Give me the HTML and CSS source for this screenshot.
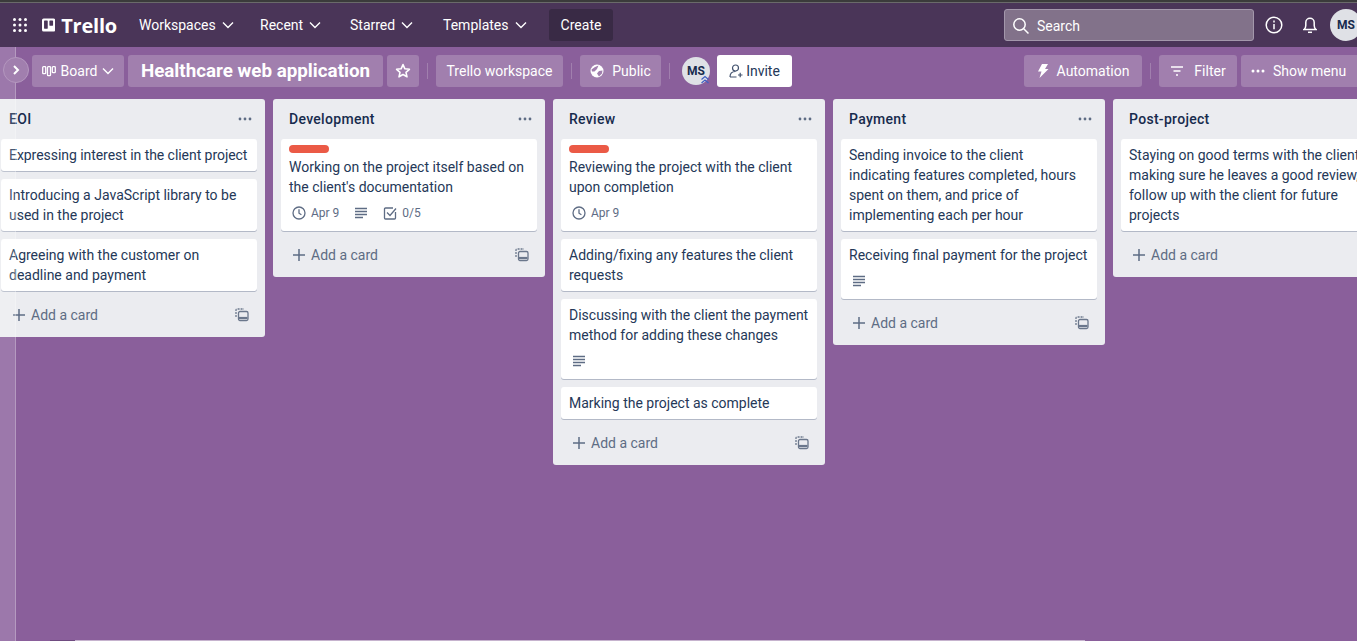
FILE: index.html
```html
<!DOCTYPE html>
<html lang="en">
<head>
<meta charset="UTF-8" />
<title>Healthcare web application | Trello</title>
<link rel="stylesheet" href="styles.css">
</head>
<body>
<div class="top-strip"></div>
<header class="nav">
  <svg class="apps" width="16" height="16" viewBox="0 0 16 16" fill="#fff"><circle cx="2.500" cy="2.500" r="1.500"/><circle cx="8" cy="2.500" r="1.500"/><circle cx="13.500" cy="2.500" r="1.500"/><circle cx="2.500" cy="8" r="1.500"/><circle cx="8" cy="8" r="1.500"/><circle cx="13.500" cy="8" r="1.500"/><circle cx="2.500" cy="13.500" r="1.500"/><circle cx="8" cy="13.500" r="1.500"/><circle cx="13.500" cy="13.500" r="1.500"/></svg>
  <div class="logo">
    <svg width="16" height="16" viewBox="0 0 16 16"><rect width="16" height="16" rx="2" fill="#fff"/><rect x="2.500" y="2.500" width="4.500" height="10" rx=".6" fill="#4a3558"/><rect x="9" y="2.500" width="4.500" height="6.500" rx=".6" fill="#4a3558"/></svg>
    <span>Trello</span>
  </div>
  <a class="nav-link nav-workspaces">Workspaces <svg width="12" height="8" viewBox="0 0 12 8"><path d="M1 1.500l5 5 5-5" fill="none" stroke="#fff" stroke-width="1.400"/></svg></a>
  <a class="nav-link nav-recent">Recent <svg width="12" height="8" viewBox="0 0 12 8"><path d="M1 1.500l5 5 5-5" fill="none" stroke="#fff" stroke-width="1.400"/></svg></a>
  <a class="nav-link nav-starred">Starred <svg width="12" height="8" viewBox="0 0 12 8"><path d="M1 1.500l5 5 5-5" fill="none" stroke="#fff" stroke-width="1.400"/></svg></a>
  <a class="nav-link nav-templates">Templates <svg width="12" height="8" viewBox="0 0 12 8"><path d="M1 1.500l5 5 5-5" fill="none" stroke="#fff" stroke-width="1.400"/></svg></a>
  <button class="create">Create</button>
  <div class="search">
    <svg width="18" height="18" viewBox="0 0 18 18" fill="none" stroke="#fff" stroke-width="1.500"><circle cx="7.500" cy="7.500" r="5.700"/><path d="M11.700 11.700l4.800 4.800"/></svg>
    <span>Search</span>
  </div>
  <svg class="info" width="18" height="18" viewBox="0 0 18 18" fill="none" stroke="#fff" stroke-width="1.500"><circle cx="9" cy="9" r="7.800"/><path d="M9 8v5.200M9 4.600v1.800"/></svg>
  <svg class="bell" width="14" height="18" viewBox="0 0 14 18" fill="none" stroke="#fff" stroke-width="1.500"><path d="M1 13.500h12c-1.200-1-1.800-2-1.800-4V6.500a4.200 4.200 0 0 0-8.400 0v3c0 2-.6 3-1.800 4z"/><path d="M5 16.300h4"/></svg>
  <div class="avatar nav-avatar">MS</div>
</header>

<section class="board-bar">
  <button class="bar-btn board-btn">
    <svg width="14" height="12" viewBox="0 0 14 12" fill="none" stroke="#fff" stroke-width="1.300"><rect x=".7" y="1.700" width="3" height="7" rx=".8"/><rect x="5.500" y="1.700" width="3" height="9" rx=".8"/><rect x="10.300" y="1.700" width="3" height="6" rx=".8"/></svg>
    Board
    <svg width="12" height="8" viewBox="0 0 12 8"><path d="M1 1.500l5 5 5-5" fill="none" stroke="#fff" stroke-width="1.400"/></svg>
  </button>
  <button class="bar-btn title">Healthcare web application</button>
  <button class="bar-btn star">
    <svg width="16" height="16" viewBox="0 0 16 16"><path d="M8 1.600l1.900 4.200 4.500.5-3.400 3 1 4.500L8 11.500l-4 2.300 1-4.500-3.400-3 4.500-.5z" fill="none" stroke="#fff" stroke-width="1.600" stroke-linejoin="round"/></svg>
  </button>
  <i class="divider"></i>
  <button class="bar-btn workspace">Trello workspace</button>
  <i class="divider"></i>
  <button class="bar-btn public">
    <svg width="14" height="14" viewBox="0 0 14 14"><circle cx="7" cy="7" r="6.500" fill="#fff"/><path d="M1.500 5.500L5 3l3.500-1.500L7 5 4.500 7.500 2 7.500zM12.500 6.500l-3.500.5L7 9.500l2 3 3-3z" fill="#a17fae"/></svg>
    Public
  </button>
  <i class="divider"></i>
  <div class="member">
    <div class="avatar">MS</div>
    <svg class="admin" width="10" height="10" viewBox="0 0 10 10" fill="none" stroke="#3f5fc4" stroke-width="1.200"><path d="M1.500 4.500L5 1.500l3.500 3M1.500 8L5 5l3.500 3"/></svg>
  </div>
  <button class="invite">
    <svg width="14" height="14" viewBox="0 0 14 14" fill="none" stroke="#42526e" stroke-width="1.200"><circle cx="6.500" cy="4" r="3"/><path d="M1 13c0-3.500 2-5.500 5.500-5.500M1 13h6.500M9 11h4.500M11.200 8.800v4.400"/></svg>
    Invite
  </button>
  <button class="bar-btn automation">
    <svg width="12" height="16" viewBox="0 0 12 16"><path d="M5 1h6L8 6h3.500L2.500 15 4.500 8.500H1z" fill="#fff"/></svg>
    Automation
  </button>
  <i class="divider"></i>
  <button class="bar-btn filter">
    <svg width="14" height="12" viewBox="0 0 14 12" fill="none" stroke="#fff" stroke-width="1.400"><path d="M1 2h12M3.500 6h7M6 10h2"/></svg>
    Filter
  </button>
  <button class="bar-btn menu">
    <svg width="14" height="4" viewBox="0 0 14 4" fill="#fff"><circle cx="2" cy="2" r="1.500"/><circle cx="7" cy="2" r="1.500"/><circle cx="12" cy="2" r="1.500"/></svg>
    Show menu
  </button>
</section>

<main class="lists">
  <section class="list">
    <div class="list-head"><h2>EOI</h2><svg class="more" width="14" height="4" viewBox="0 0 14 4" fill="#5e6c84"><circle cx="2" cy="2" r="1.400"/><circle cx="7" cy="2" r="1.400"/><circle cx="12" cy="2" r="1.400"/></svg></div>
    <article class="card"><p class="one-line">Expressing interest in the client project</p></article>
    <article class="card"><p>Introducing a JavaScript library to be used in the project</p></article>
    <article class="card"><p>Agreeing with the customer on deadline and payment</p></article>
    <div class="add"><svg width="14" height="14" viewBox="0 0 14 14" stroke="#5e6c84" stroke-width="1.500"><path d="M7 1v12M1 7h12"/></svg><span>Add a card</span><svg class="tpl" width="14" height="14" viewBox="0 0 14 14" fill="none" stroke="#6b778c" stroke-width="1.300"><path d="M1 9V2a1 1 0 0 1 1-1h7" stroke-dasharray="2 1"/><rect x="3.500" y="3.500" width="9.500" height="9" rx="1.500"/><path d="M4 10h8.500" stroke-width="2.200"/></svg></div>
  </section>

  <section class="list">
    <div class="list-head"><h2>Development</h2><svg class="more" width="14" height="4" viewBox="0 0 14 4" fill="#5e6c84"><circle cx="2" cy="2" r="1.400"/><circle cx="7" cy="2" r="1.400"/><circle cx="12" cy="2" r="1.400"/></svg></div>
    <article class="card">
      <div class="label"></div>
      <p>Working on the project itself based on the client's documentation</p>
      <div class="badges">
        <span class="badge"><svg width="14" height="14" viewBox="0 0 14 14" fill="none" stroke="#5e6c84" stroke-width="1.300"><circle cx="7" cy="7" r="6"/><path d="M7 3.300v3.900l2.400 1.600"/></svg>Apr 9</span>
        <span class="badge"><svg width="14" height="12" viewBox="0 0 14 12" stroke="#5e6c84" stroke-width="1.300"><path d="M1 1.500h12M1 4.500h12M1 7.500h12M1 10.500h8"/></svg></span>
        <span class="badge"><svg width="14" height="14" viewBox="0 0 14 14" fill="none" stroke="#5e6c84" stroke-width="1.300"><path d="M12.500 6v6a1 1 0 0 1-1 1h-9a1 1 0 0 1-1-1V3a1 1 0 0 1 1-1H10"/><path d="M4 6.500l3 3 6-7"/></svg>0/5</span>
      </div>
    </article>
    <div class="add"><svg width="14" height="14" viewBox="0 0 14 14" stroke="#5e6c84" stroke-width="1.500"><path d="M7 1v12M1 7h12"/></svg><span>Add a card</span><svg class="tpl" width="14" height="14" viewBox="0 0 14 14" fill="none" stroke="#6b778c" stroke-width="1.300"><path d="M1 9V2a1 1 0 0 1 1-1h7" stroke-dasharray="2 1"/><rect x="3.500" y="3.500" width="9.500" height="9" rx="1.500"/><path d="M4 10h8.500" stroke-width="2.200"/></svg></div>
  </section>

  <section class="list">
    <div class="list-head"><h2>Review</h2><svg class="more" width="14" height="4" viewBox="0 0 14 4" fill="#5e6c84"><circle cx="2" cy="2" r="1.400"/><circle cx="7" cy="2" r="1.400"/><circle cx="12" cy="2" r="1.400"/></svg></div>
    <article class="card">
      <div class="label"></div>
      <p>Reviewing the project with the client upon completion</p>
      <div class="badges">
        <span class="badge"><svg width="14" height="14" viewBox="0 0 14 14" fill="none" stroke="#5e6c84" stroke-width="1.300"><circle cx="7" cy="7" r="6"/><path d="M7 3.300v3.900l2.400 1.600"/></svg>Apr 9</span>
      </div>
    </article>
    <article class="card"><p>Adding/fixing any features the client requests</p></article>
    <article class="card">
      <p>Discussing with the client the payment method for adding these changes</p>
      <div class="badges"><span class="badge"><svg width="14" height="12" viewBox="0 0 14 12" stroke="#5e6c84" stroke-width="1.300"><path d="M1 1.500h12M1 4.500h12M1 7.500h12M1 10.500h8"/></svg></span></div>
    </article>
    <article class="card"><p>Marking the project as complete</p></article>
    <div class="add"><svg width="14" height="14" viewBox="0 0 14 14" stroke="#5e6c84" stroke-width="1.500"><path d="M7 1v12M1 7h12"/></svg><span>Add a card</span><svg class="tpl" width="14" height="14" viewBox="0 0 14 14" fill="none" stroke="#6b778c" stroke-width="1.300"><path d="M1 9V2a1 1 0 0 1 1-1h7" stroke-dasharray="2 1"/><rect x="3.500" y="3.500" width="9.500" height="9" rx="1.500"/><path d="M4 10h8.500" stroke-width="2.200"/></svg></div>
  </section>

  <section class="list">
    <div class="list-head"><h2>Payment</h2><svg class="more" width="14" height="4" viewBox="0 0 14 4" fill="#5e6c84"><circle cx="2" cy="2" r="1.400"/><circle cx="7" cy="2" r="1.400"/><circle cx="12" cy="2" r="1.400"/></svg></div>
    <article class="card"><p>Sending invoice to the client<br>indicating features completed, hours spent on them, and price of implementing each per hour</p></article>
    <article class="card">
      <p>Receiving final payment for the project</p>
      <div class="badges"><span class="badge"><svg width="14" height="12" viewBox="0 0 14 12" stroke="#5e6c84" stroke-width="1.300"><path d="M1 1.500h12M1 4.500h12M1 7.500h12M1 10.500h8"/></svg></span></div>
    </article>
    <div class="add"><svg width="14" height="14" viewBox="0 0 14 14" stroke="#5e6c84" stroke-width="1.500"><path d="M7 1v12M1 7h12"/></svg><span>Add a card</span><svg class="tpl" width="14" height="14" viewBox="0 0 14 14" fill="none" stroke="#6b778c" stroke-width="1.300"><path d="M1 9V2a1 1 0 0 1 1-1h7" stroke-dasharray="2 1"/><rect x="3.500" y="3.500" width="9.500" height="9" rx="1.500"/><path d="M4 10h8.500" stroke-width="2.200"/></svg></div>
  </section>

  <section class="list">
    <div class="list-head"><h2>Post-project</h2><svg class="more" width="14" height="4" viewBox="0 0 14 4" fill="#5e6c84"><circle cx="2" cy="2" r="1.400"/><circle cx="7" cy="2" r="1.400"/><circle cx="12" cy="2" r="1.400"/></svg></div>
    <article class="card"><p>Staying on good terms with the client, making sure he leaves a good review, follow up with the client for future projects</p></article>
    <div class="add"><svg width="14" height="14" viewBox="0 0 14 14" stroke="#5e6c84" stroke-width="1.500"><path d="M7 1v12M1 7h12"/></svg><span>Add a card</span></div>
  </section>
</main>

<div class="sidebar"></div>
<button class="sidebar-toggle"><svg width="8" height="10" viewBox="0 0 8 10"><path d="M2 1l4 4-4 4" fill="none" stroke="#fff" stroke-width="2"/></svg></button>
<div class="scrollbar"><i></i></div>
</body>
</html>
```
FILE: styles.css
```css
* {
  box-sizing: border-box;
}
html, body {
  height: 100%;
}
body {
  margin: 0;
  width: 1357px;
  height: 641px;
  overflow: hidden;
  position: relative;
  font-family: Roboto, "Open Sans", sans-serif;
  font-size: 14px;
  color: #253858;
  background-color: #8a5f9b;
}
button {
  font-family: inherit;
  font-size: inherit;
  border: none;
  padding: 0;
}

.top-strip {
  height: 3px;
  background-color: #3b3b3b;
  border-bottom: 1px solid #6a6a6a;
}
.nav {
  height: 44px;
  background-color: #4a3558;
  color: #fff;
  display: flex;
  align-items: center;
  padding-left: 12px;
}
.logo {
  display: flex;
  align-items: center;
  gap: 6px;
  margin-left: 14px;
  margin-right: 22px;
  font-family: "Open Sans", sans-serif;
  font-weight: 700;
  font-size: 20px;
  letter-spacing: -0.2px;
  width: 75px;
}
.nav-link {
  display: flex;
  align-items: center;
  gap: 6px;
  white-space: nowrap;
}
.nav-workspaces {
  width: 121px;
}
.nav-recent {
  width: 90px;
}
.nav-starred {
  width: 93px;
}
.nav-templates {
  width: 106px;
}
.create {
  width: 64px;
  height: 32px;
  border-radius: 3px;
  background-color: #392a45;
  color: #fff;
}
.search {
  width: 250px;
  height: 32px;
  margin-left: auto;
  display: flex;
  align-items: center;
  gap: 7px;
  padding-left: 7px;
  padding-top: 1px;
  border: 1px solid #a397ab;
  border-radius: 3px;
  background-color: #82728a;
}
.info {
  margin-left: 11px;
}
.bell {
  margin-left: 20px;
}
.nav-avatar {
  margin-left: 13px;
  margin-right: -5px;
  width: 32px;
  height: 32px;
}
.avatar {
  display: flex;
  align-items: center;
  justify-content: center;
  flex-shrink: 0;
  border-radius: 50%;
  background-color: #dfe1e6;
  color: #172b4d;
  font-weight: 700;
  font-size: 12px;
}

.board-bar {
  height: 52px;
  display: flex;
  align-items: center;
  padding: 8px 0 12px 32px;
  color: #fff;
}
.bar-btn {
  height: 32px;
  border-radius: 3px;
  background-color: #a17fae;
  color: #fff;
  display: flex;
  align-items: center;
  justify-content: center;
  white-space: nowrap;
  flex-shrink: 0;
}
.board-btn {
  width: 92px;
  gap: 5px;
  margin-right: 4px;
}
.title {
  width: 255px;
  font-size: 18.8px;
  font-weight: 700;
  margin-right: 4px;
}
.star {
  width: 32px;
}
.divider {
  width: 1px;
  height: 16px;
  margin: 0 8px;
  background-color: #a17fae;
  flex-shrink: 0;
}
.workspace {
  width: 127px;
}
.public {
  width: 81px;
  gap: 8px;
}
.member {
  position: relative;
  margin-left: 4px;
  margin-right: 7px;
}
.member .avatar {
  width: 28px;
  height: 28px;
}
.admin {
  position: absolute;
  right: 0;
  bottom: 0;
}
.invite {
  width: 75px;
  height: 32px;
  border-radius: 3px;
  background-color: #fff;
  color: #253858;
  display: flex;
  align-items: center;
  justify-content: center;
  gap: 3px;
}
.automation {
  width: 118px;
  gap: 8px;
  margin-left: auto;
}
.filter {
  width: 78px;
  gap: 10px;
  margin-right: 4px;
}
.menu {
  width: 128px;
  gap: 8px;
  margin-right: -12px;
  justify-content: flex-start;
  padding-left: 10px;
}

.lists {
  display: flex;
  align-items: flex-start;
  gap: 8px;
  margin-left: -7px;
}
.list {
  width: 272px;
  flex-shrink: 0;
  background-color: #ebecf0;
  border-radius: 3px;
  padding: 0 8px 6px;
}
.list-head {
  height: 40px;
  display: flex;
  align-items: center;
  justify-content: space-between;
  padding: 0 5px 0 8px;
}
.list-head h2 {
  margin: 0;
  font-size: 14px;
  font-weight: 500;
  letter-spacing: 0.3px;
  color: #172b4d;
}
.card {
  background-color: #fff;
  border-radius: 3px;
  box-shadow: 0 1px 0 #b3b9c7;
  margin-bottom: 8px;
  padding: 6px 8px;
}
.card p {
  margin: 0;
  line-height: 20px;
}
.card .one-line {
  white-space: nowrap;
  letter-spacing: -0.05px;
}
.label {
  width: 40px;
  height: 8px;
  border-radius: 4px;
  background-color: #eb5a46;
  margin-bottom: 4px;
}
.badges {
  display: flex;
  align-items: center;
  gap: 15px;
  height: 20px;
  margin-top: 6px;
  margin-bottom: 2px;
  padding-left: 3px;
  color: #5e6c84;
  font-size: 12px;
}
.badge {
  display: flex;
  align-items: center;
  gap: 5px;
}
.add {
  height: 32px;
  display: flex;
  align-items: center;
  gap: 5px;
  padding: 0 8px 0 11px;
  color: #5e6c84;
}
.tpl {
  margin-left: auto;
}

.sidebar {
  position: absolute;
  left: 0;
  top: 47px;
  bottom: 0;
  width: 16px;
  background-color: rgba(255, 255, 255, 0.16);
  border-right: 1px solid rgba(255, 255, 255, 0.25);
}
.sidebar-toggle {
  position: absolute;
  left: 3px;
  top: 57px;
  width: 26px;
  height: 26px;
  border-radius: 50%;
  background-color: #a17fae;
  border: 1px solid #b497bf;
  display: flex;
  align-items: center;
  justify-content: center;
}
.scrollbar {
  position: absolute;
  left: 50px;
  right: 272px;
  bottom: 0;
  height: 1px;
  background-color: #c6b3ce;
}
.scrollbar i {
  display: block;
  width: 25px;
  height: 1px;
  background-color: #6f4b80;
}
```
